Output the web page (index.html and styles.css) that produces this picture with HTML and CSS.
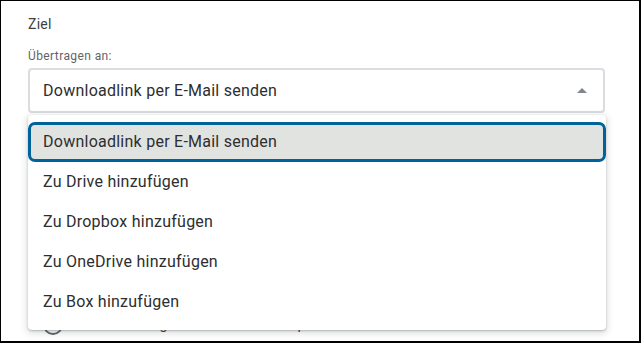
FILE: index.html
```html
<!DOCTYPE html>
<html lang="de">
<head>
<meta charset="utf-8">
<title>Ziel</title>
<link rel="stylesheet" href="styles.css">
</head>
<body>
<div class="frame">
  <h2 class="section-title">Ziel</h2>
  <div class="field-label">Übertragen an:</div>
  <div class="select-wrap">
    <div class="select">
      <span class="select-value">Downloadlink per E-Mail senden</span>
      <span class="arrow"></span>
    </div>
    <ul class="menu">
      <li class="item selected">Downloadlink per E-Mail senden</li>
      <li class="item">Zu Drive hinzufügen</li>
      <li class="item">Zu Dropbox hinzufügen</li>
      <li class="item">Zu OneDrive hinzufügen</li>
      <li class="item">Zu Box hinzufügen</li>
    </ul>
  </div>
  <section class="frequency">
    <div class="radio-row">
      <span class="radio"></span>
      <span class="radio-label">Sofort einmalig starten und einen Export erstellen</span>
    </div>
  </section>
</div>
</body>
</html>
```
FILE: styles.css
```css
html, body {
  margin: 0;
  padding: 0;
  background: #fff;
}

.frame {
  box-sizing: border-box;
  width: 641px;
  height: 343px;
  border: 1px solid #000;
  border-right-width: 2px;
  border-bottom-width: 2px;
  padding: 13px 34px 0 27px;
  overflow: hidden;
  font-family: Roboto, "Liberation Sans", sans-serif;
  color: #202124;
}

.section-title {
  margin: 0;
  font-size: 14px;
  line-height: 20px;
  font-weight: 400;
  letter-spacing: 0.25px;
  color: #3c4043;
}

.field-label {
  margin-top: 14px;
  margin-bottom: 4px;
  font-size: 12px;
  line-height: 16px;
  letter-spacing: 0.4px;
  color: #5f6368;
}

.select-wrap {
  position: relative;
}

.select {
  box-sizing: border-box;
  height: 45px;
  border: 2px solid #dadce0;
  border-radius: 4px;
  display: flex;
  align-items: center;
  justify-content: space-between;
  padding: 0 16px 0 13px;
  font-size: 16px;
  line-height: 24px;
  letter-spacing: 0.25px;
  color: #2d2e30;
}

.arrow {
  width: 0;
  height: 0;
  border-left: 5px solid transparent;
  border-right: 5px solid transparent;
  border-bottom: 5px solid #80868b;
}

.menu {
  position: absolute;
  top: calc(100% + 2px);
  left: 0;
  width: 578px;
  box-sizing: border-box;
  margin: 0;
  padding: 7px 0 8px;
  list-style: none;
  background: #fff;
  border-radius: 4px;
  box-shadow: 0 2px 6px 2px rgba(60, 64, 67, 0.15), 0 1px 2px rgba(60, 64, 67, 0.3);
  z-index: 2;
}

.item {
  box-sizing: border-box;
  height: 40px;
  display: flex;
  align-items: center;
  padding: 0 12px;
  border: 3px solid transparent;
  border-radius: 7px;
  font-size: 16px;
  line-height: 24px;
  letter-spacing: 0.25px;
  color: #2d2e30;
}

.item.selected {
  background: #e1e3e1;
  border-color: #00629b;
}

.frequency {
  margin-top: 201px;
}

.radio-row {
  display: flex;
  align-items: flex-start;
  gap: 9px;
  padding-left: 15px;
}

.radio {
  box-sizing: border-box;
  width: 20px;
  height: 20px;
  margin-top: 1px;
  border: 2px solid #5f6368;
  border-radius: 50%;
  flex: none;
}

.radio-label {
  font-size: 14px;
  line-height: 20px;
  color: #3c4043;
}
```
